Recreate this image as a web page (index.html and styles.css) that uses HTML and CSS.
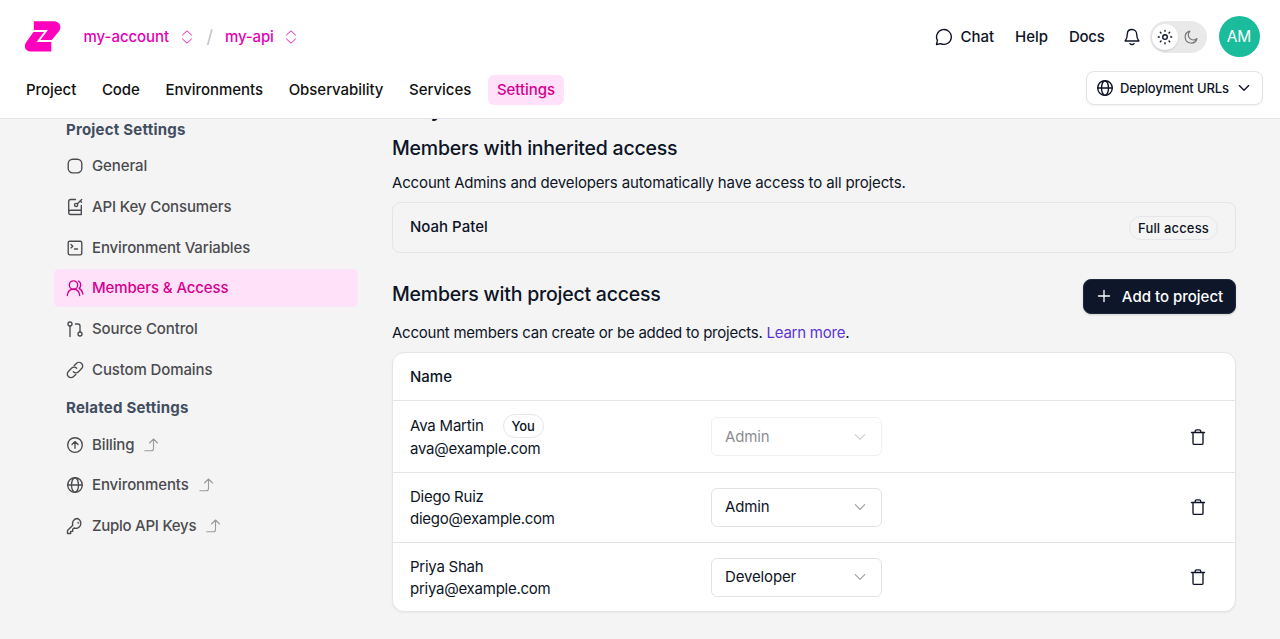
FILE: index.html
```html
<!DOCTYPE html>
<html lang="en">
<head>
    <meta charset="UTF-8">
    <meta name="viewport" content="width=device-width, initial-scale=1.0">
    <title>Members &amp; Access</title>
    <link rel="stylesheet" href="styles.css">
</head>
<body>

<svg class="sprite" aria-hidden="true">
    <symbol id="i-updown" viewBox="0 0 12 16"><path d="M1.500 6L6 1.800 10.500 6M1.500 10L6 14.200l4.500-4.200"/></symbol>
    <symbol id="i-down" viewBox="0 0 12 12"><path d="M1.3 3.6L6 8.3l4.700-4.700"/></symbol>
    <symbol id="i-globe" viewBox="0 0 18 18"><circle cx="9" cy="9" r="7.300"/><ellipse cx="9" cy="9" rx="3.500" ry="7.300"/><path d="M1.700 9h14.600"/></symbol>
    <symbol id="i-out" viewBox="0 0 14 14"><path d="M.8 12.700h6.400c1.500 0 2.300-.8 2.300-2.300V1M5.500 5L9.500 1l4 4"/></symbol>
    <symbol id="i-trash" viewBox="0 0 16 18"><path d="M1.500 4.500h13M3 4.500v10.700c0 .8.400 1.200 1.200 1.200h7.600c.8 0 1.200-.4 1.200-1.200V4.500M5.200 4.300v-.9c0-1 .6-1.600 1.600-1.600h2.400c1 0 1.600.6 1.600 1.600v.9"/></symbol>
</svg>

<header class="header">
    <div class="top-row">
        <svg class="logo" viewBox="0 0 37 31">
            <path fill="#ff00bd" d="M9.800.3H29.500c5.800 0 8.800 5.200 5.500 9.900l-7.700 9.300V30.600H7.500C1.800 30.600-.8 26 2 21.500L9.800 10.500z"/>
            <path fill="none" stroke="#fff" stroke-width="1.900" d="M6.500 10h15.500L14.500 20h14.500"/>
        </svg>
        <div class="crumbs">
            <a class="crumb account">my-account</a>
            <svg class="icon updown"><use href="#i-updown"/></svg>
            <span class="slash">/</span>
            <a class="crumb api">my-api</a>
            <svg class="icon updown"><use href="#i-updown"/></svg>
        </div>
        <div class="tools">
            <a class="tool chat">
                <svg class="icon" viewBox="0 0 18 18"><path d="M1.500 16.500l.9-4.100A7.400 7.400 0 1 1 5.700 15.600z"/></svg>
                <span>Chat</span>
            </a>
            <a class="tool help">Help</a>
            <a class="tool docs">Docs</a>
            <svg class="icon bell" viewBox="0 0 16 18"><path d="M8 1.500c-2.800 0-4.700 2-4.700 4.800 0 3.800-.9 5.200-2.200 6.700h13.800c-1.300-1.500-2.200-2.900-2.200-6.700 0-2.800-1.900-4.800-4.700-4.800zM6 15.600c.8 1.200 3.200 1.200 4 0"/></svg>
            <div class="theme">
                <span class="sun"><svg class="icon" viewBox="0 0 16 16"><circle cx="8" cy="8" r="2.300"/><path d="M8 1.300v1M8 13.700v1M1.300 8h1M13.700 8h1M3.300 3.300l.7.7M12 12l.7.7M3.300 12.700l.7-.7M12 4l.7-.7"/></svg></span>
                <svg class="icon moon" viewBox="0 0 16 16"><path d="M6.800 2.200A6 6 0 1 0 14 9.500 5 5 0 0 1 6.800 2.200z"/></svg>
            </div>
            <div class="avatar">AM</div>
        </div>
    </div>
    <div class="nav-row">
        <nav class="nav">
            <a>Project</a>
            <a>Code</a>
            <a>Environments</a>
            <a>Observability</a>
            <a>Services</a>
            <a class="active">Settings</a>
        </nav>
        <button class="deploy">
            <svg class="icon"><use href="#i-globe"/></svg>
            <span>Deployment URLs</span>
            <svg class="icon small"><use href="#i-down"/></svg>
        </button>
    </div>
</header>

<div class="page">
    <aside class="sidebar">
        <h4>Project Settings</h4>
        <div class="menu">
            <a><svg class="icon" viewBox="0 0 18 18"><rect x="2.200" y="2.200" width="13.600" height="13.600" rx="4.500"/></svg>General</a>
            <a><svg class="icon" viewBox="0 0 18 18"><path d="M9.500 1.500H4.700c-1.200 0-2 .8-2 2v11c0 1.200.8 2 2 2h10.600V7.500M2.700 14c0-1.100.8-1.800 2-1.800h10.600M11.400 5.700l4.300-4.200M14.200 3l1.300 1.300"/><circle cx="10.100" cy="6.900" r="1.600"/></svg>API Key Consumers</a>
            <a><svg class="icon" viewBox="0 0 18 18"><rect x="2.200" y="2.200" width="13.600" height="13.600" rx="1.500"/><path d="M5 5.500l1.800 1.700L5 8.900M8.500 10h3"/></svg>Environment Variables</a>
            <a class="active"><svg class="icon" viewBox="0 0 18 18"><circle cx="7.500" cy="6" r="4.200"/><path d="M1.300 16.500c.3-3.800 2.700-6.300 6.200-6.300s5.900 2.500 6.200 6.300M12.500 2c2.700 1.300 3 5.500.6 7.400 2 1 3.300 2.900 3.800 5.600"/></svg>Members &amp; Access</a>
            <a><svg class="icon" viewBox="0 0 18 18"><circle cx="4" cy="4" r="2"/><circle cx="14" cy="14" r="2"/><path d="M4 6v10.500M9.500 4H12c1.300 0 2 .7 2 2v6"/></svg>Source Control</a>
            <a><svg class="icon" viewBox="0 0 18 18"><path d="M7.300 10.700a3.600 3.600 0 0 0 5.200 0l3.100-3.100a3.670 3.670 0 0 0-5.200-5.200L8.200 4.600M10.700 7.300a3.600 3.600 0 0 0-5.200 0l-3.100 3.100a3.670 3.670 0 0 0 5.200 5.200l2.200-2.200"/></svg>Custom Domains</a>
        </div>
        <h4 class="related">Related Settings</h4>
        <div class="menu">
            <a><svg class="icon" viewBox="0 0 18 18"><circle cx="9" cy="9" r="7.300"/><path d="M9 12.300V5.800M6 8.600l3-3 3 3"/></svg>Billing<svg class="icon out"><use href="#i-out"/></svg></a>
            <a><svg class="icon"><use href="#i-globe"/></svg>Environments<svg class="icon out"><use href="#i-out"/></svg></a>
            <a class="keys"><svg class="icon" viewBox="0 0 18 18"><path d="M11.500 1.500a5 5 0 0 0-4.700 6.700L1.500 13.500v3h3.200v-2.200h2v-2l1.400-1.300A5 5 0 1 0 11.500 1.500z"/><circle cx="12.300" cy="5.700" r=".3"/></svg>Zuplo API Keys<svg class="icon out"><use href="#i-out"/></svg></a>
        </div>
    </aside>

    <main class="content">
        <h1>Project Access</h1>
        <h2 class="inherited">Members with inherited access</h2>
        <p class="desc">Account Admins and developers automatically have access to all projects.</p>
        <div class="box">
            <span class="name">Noah Patel</span>
            <span class="badge full">Full access</span>
        </div>

        <div class="section-head">
            <h2 class="projects">Members with project access</h2>
            <button class="add">
                <svg class="icon" viewBox="0 0 16 16"><path d="M8 2.500v11M2.500 8h11"/></svg>
                <span>Add to project</span>
            </button>
        </div>
        <p class="desc second">Account members can create or be added to projects. <a>Learn more</a>.</p>

        <div class="table">
            <div class="row head">Name</div>
            <div class="row first">
                <div class="member">
                    <div class="line">Ava Martin <span class="badge">You</span></div>
                    <div>ava@example.com</div>
                </div>
                <div class="select disabled">Admin<svg class="icon small"><use href="#i-down"/></svg></div>
                <svg class="icon trash"><use href="#i-trash"/></svg>
            </div>
            <div class="row">
                <div class="member">
                    <div>Diego Ruiz</div>
                    <div>diego@example.com</div>
                </div>
                <div class="select">Admin<svg class="icon small"><use href="#i-down"/></svg></div>
                <svg class="icon trash"><use href="#i-trash"/></svg>
            </div>
            <div class="row">
                <div class="member">
                    <div>Priya Shah</div>
                    <div>priya@example.com</div>
                </div>
                <div class="select">Developer<svg class="icon small"><use href="#i-down"/></svg></div>
                <svg class="icon trash"><use href="#i-trash"/></svg>
            </div>
        </div>
    </main>
</div>

</body>
</html>
```

FILE: styles.css
```css
* {
    box-sizing: border-box;
}
body {
    margin: 0;
    height: 100vh;
    display: flex;
    flex-direction: column;
    overflow: hidden;
    background: #f4f4f4;
    color: #0d1426;
    font-family: Inter, "Liberation Sans", sans-serif;
    font-size: 15px;
    line-height: 22px;
}
h1, h2, h4, p {
    margin: 0;
}
button {
    font-family: inherit;
}
.sprite {
    display: none;
}
.icon {
    width: 18px;
    height: 18px;
    flex: none;
    fill: none;
    stroke: currentColor;
    stroke-width: 1.35;
    stroke-linecap: round;
    stroke-linejoin: round;
}
.icon.small {
    width: 12px;
    height: 12px;
}

/* header */
.header {
    flex: none;
    height: 119px;
    padding: 16px 17px 0 17px;
    background: #fff;
    border-bottom: 1px solid #e4e4e6;
}
.top-row {
    display: flex;
    align-items: center;
    height: 41px;
    padding: 0 3.500px 0 7px;
}
.logo {
    width: 37px;
    height: 31px;
    margin-top: -1px;
}
.crumbs {
    display: flex;
    align-items: center;
    margin-left: 22.500px;
    font-weight: 500;
    color: #e600b4;
}
.crumb {
    letter-spacing: -.05px;
}
.api {
    letter-spacing: -.2px;
}
.updown {
    width: 12px;
    height: 16px;
    margin-left: 11.500px;
    stroke-width: .9;
}
.slash {
    margin: 0 12px 0 14px;
    color: #c4c4c8;
    font-size: 18px;
    font-weight: 400;
}
.tools {
    display: flex;
    align-items: center;
    margin-left: auto;
    font-weight: 500;
}
.tool {
    margin-right: 21px;
}
.docs {
    margin-right: 19px;
    letter-spacing: -.3px;
}
.chat {
    display: flex;
    align-items: center;
    gap: 7px;
}
.bell {
    width: 16px;
    margin-right: 10px;
}
.theme {
    display: flex;
    align-items: center;
    width: 57px;
    height: 32px;
    padding: 0 3px 0 2px;
    border-radius: 16px;
    background: #e9e9e9;
}
.sun {
    display: flex;
    align-items: center;
    justify-content: center;
    width: 26px;
    height: 26px;
    border-radius: 50%;
    background: #fff;
    box-shadow: 0 1px 2px rgba(0, 0, 0, .12);
}
.sun .icon {
    width: 16px;
    height: 16px;
}
.moon {
    width: 16px;
    height: 16px;
    margin-left: 5px;
    color: #777;
    stroke-width: 1.2;
}
.avatar {
    width: 41px;
    height: 41px;
    margin-left: 12px;
    border-radius: 50%;
    background: #1abc9c;
    color: #fff;
    font-size: 15.500px;
    font-weight: 400;
    line-height: 41px;
    text-align: center;
}
.nav-row {
    display: flex;
    align-items: center;
    justify-content: space-between;
    height: 36px;
    margin-top: 13px;
}
.nav {
    display: flex;
    gap: 7.700px;
    margin-top: 4px;
    font-weight: 500;
    letter-spacing: -.05px;
    color: #111;
}
.nav a {
    padding: 4px 9px;
    border-radius: 6px;
}
.nav .active {
    background: #ffe2fa;
    color: #d6008f;
}
.deploy {
    display: flex;
    align-items: center;
    gap: 6px;
    width: 177px;
    height: 34px;
    padding: 0 12px 0 9px;
    border: 1px solid #e2e3e7;
    border-radius: 8px;
    background: #fff;
    box-shadow: 0 1px 2px rgba(0, 0, 0, .05);
    color: #0d1426;
    font-size: 13px;
    font-weight: 500;
    letter-spacing: -.12px;
}
.deploy .small {
    margin-left: auto;
}

/* page */
.page {
    flex: 1;
    display: flex;
    min-height: 0;
    padding: 0 44px 0 54px;
    overflow: hidden;
}
.sidebar {
    width: 304px;
    margin-right: 34px;
    color: #4b4b4f;
    font-weight: 500;
    letter-spacing: -.12px;
}
.sidebar h4 {
    padding: 0 12px;
    color: #424d60;
    font-size: 15px;
    font-weight: 700;
    letter-spacing: .22px;
}
.menu {
    display: flex;
    flex-direction: column;
    gap: 2.7px;
    margin-top: 6.200px;
}
.menu a {
    display: flex;
    align-items: center;
    gap: 8px;
    height: 38px;
    padding: 0 12px;
    border-radius: 5px;
}
.menu .active {
    background: #ffe2fa;
    color: #d6008f;
}
.menu .keys {
    letter-spacing: -.27px;
}
.sidebar .related {
    margin-top: 8.800px;
}
.out {
    width: 14px;
    height: 14px;
    margin-left: 2px;
    color: #9b9b9f;
    stroke-width: 1.1;
}
.content {
    flex: 1;
}
h1 {
    margin-top: -28px;
    font-size: 26px;
    font-weight: 600;
    line-height: 32px;
    letter-spacing: -.5px;
}
h2 {
    font-size: 19.500px;
    font-weight: 500;
    line-height: 28px;
    letter-spacing: -.22px;
}
.inherited {
    margin-top: 11.300px;
}
.desc {
    margin-top: 10px;
    letter-spacing: -.15px;
}
.desc a {
    color: #5b35d5;
}
.box {
    display: flex;
    align-items: center;
    justify-content: space-between;
    height: 51px;
    margin-top: 8px;
    padding: 0 17px;
    border: 1px solid #e5e5e8;
    border-radius: 8px;
}
.name {
    margin-top: -1px;
    font-weight: 500;
}
.badge {
    padding: 0 8px;
    border: 1px solid #e4e6ea;
    border-radius: 12px;
    font-size: 13px;
    font-weight: 500;
    line-height: 22px;
}
.full {
    letter-spacing: .17px;
}
.section-head {
    display: flex;
    align-items: center;
    justify-content: space-between;
    height: 35px;
    margin-top: 25.700px;
}
.projects {
    margin-top: -5px;
}
.add {
    display: flex;
    align-items: center;
    justify-content: center;
    gap: 10px;
    width: 153px;
    height: 35px;
    padding: 0;
    border: 1px solid #1f2a3d;
    border-radius: 8px;
    background: #0e172a;
    box-shadow: 0 1px 2px rgba(0, 0, 0, .15);
    color: #fff;
    font-size: 15px;
    font-weight: 500;
}
.add .icon {
    width: 16px;
    height: 16px;
}
.second {
    margin-top: 8.500px;
    letter-spacing: -.24px;
}
.table {
    margin-top: 7.500px;
    border: 1px solid #e5e5e8;
    border-radius: 12px;
    background: #fff;
    box-shadow: 0 1px 2px rgba(0, 0, 0, .06);
}
.row {
    display: grid;
    grid-template-columns: 301px 171px 1fr;
    align-items: center;
    height: 69.700px;
    padding: 0 29px 0 17px;
    border-top: 1px solid #e5e5e8;
}
.row.head {
    height: 47.500px;
    border-top: 0;
    font-weight: 500;
}
.row.first {
    height: 71.500px;
}
.member {
    margin-top: 1px;
    letter-spacing: -.25px;
}
.line {
    display: flex;
    align-items: center;
    gap: 19px;
    height: 24px;
    letter-spacing: -.2px;
}
.select {
    display: flex;
    align-items: center;
    justify-content: space-between;
    height: 39px;
    padding: 0 15px 0 13px;
    border: 1px solid #e1e2e6;
    border-radius: 6px;
    letter-spacing: -.15px;
}
.select .icon {
    color: #a0a2a8;
    stroke-width: 1.2;
}
.disabled {
    opacity: .5;
}
.trash {
    width: 16px;
    justify-self: end;
}
```
